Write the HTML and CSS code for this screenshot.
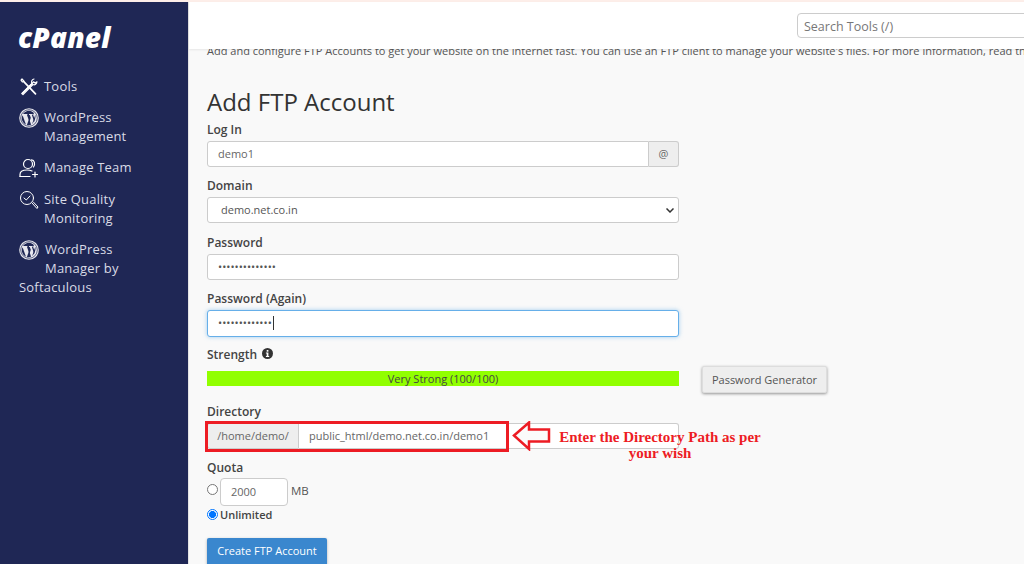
FILE: index.html
```html
<!DOCTYPE html>
<html lang="en">
<head>
    <meta charset="UTF-8">
    <meta name="viewport" content="width=device-width, initial-scale=1.0">
    <title>cPanel - Add FTP Account</title>
    <link rel="stylesheet" href="styles.css">
</head>
<body>

    <div class="top-line"></div>

    <div class="layout">

        <!-- Sidebar -->
        <aside class="sidebar">
            <div class="logo">cPanel</div>
            <ul class="side-menu">
                <li class="side-tools">
                    <svg class="side-icon" width="20" height="20" viewBox="0 0 20 20" fill="none" stroke="#fff" stroke-width="1.200" stroke-linecap="round" stroke-linejoin="round">
                        <path d="M3 2 L2 3.200 L3.500 5 L5 4.200 Z"/>
                        <path d="M5 4.800 L16.500 16.800" stroke-width="1.700"/>
                        <path d="M15 2 C12.800 2.500 12 4.800 13 6.500 L3 16.500"/>
                        <path d="M3 16.500 L4 17.500 L14 7.500 C15.800 8.500 17.800 7 18 4.800 L16 6 L14.800 4.800 Z"/>
                    </svg>
                    <span>Tools</span>
                </li>
                <li class="side-wp">
                    <svg class="side-icon" width="20" height="20" viewBox="0 0 20 20">
                        <use href="#wp-logo"/>
                    </svg>
                    <span>WordPress<br>Management</span>
                </li>
                <li class="side-team">
                    <svg class="side-icon" width="20" height="20" viewBox="0 0 20 20" fill="none" stroke="#fff" stroke-width="1.200" stroke-linecap="round">
                        <circle cx="9" cy="6" r="4.500"/>
                        <path d="M12.500 1.800 C15.500 2 16.500 6 14.500 9"/>
                        <path d="M1 18.500 V16.500 C1 13.500 4 12 8 12 C10 12 11.500 12.300 13 13"/>
                        <path d="M1 18.500 H11"/>
                        <path d="M16 14 V19 M13.500 16.500 H18.500"/>
                    </svg>
                    <span>Manage Team</span>
                </li>
                <li class="side-quality">
                    <svg class="side-icon" width="20" height="20" viewBox="0 0 20 20" fill="none" stroke="#fff" stroke-width="1" stroke-linecap="round" stroke-linejoin="round">
                        <circle cx="8" cy="8" r="6.500"/>
                        <path d="M5 8 L7.300 10 L11 6"/>
                        <path d="M13 13 L18 18.500 L19 17 L14.300 12"/>
                    </svg>
                    <span>Site Quality<br>Monitoring</span>
                </li>
                <li class="side-soft">
                    <svg class="side-icon soft-icon" width="20" height="20" viewBox="0 0 20 20">
                        <use href="#wp-logo"/>
                    </svg>
                    WordPress<br><span class="soft-indent">Manager by</span><br>Softaculous
                </li>
            </ul>
        </aside>

        <div class="main">

            <!-- Header -->
            <header class="header">
                <div class="search-box">Search Tools (/)</div>
            </header>

            <!-- Page content -->
            <div class="content">
                <p class="intro">Add and configure FTP Accounts to get your website on the internet fast. You can use an FTP client to manage your website's files. For more information, read the documentation.</p>
                <h1>Add FTP Account</h1>

                <div class="form-group">
                    <label>Log In</label>
                    <div class="input-group">
                        <div class="field">demo1</div>
                        <div class="addon addon-right">@</div>
                    </div>
                </div>

                <div class="form-group">
                    <label>Domain</label>
                    <div class="field field-select">
                        demo.net.co.in
                        <svg width="8" height="5" viewBox="0 0 8 5" fill="none" stroke="#333" stroke-width="1.500">
                            <path d="M0.500 0.500 L4 4 L7.500 0.500"/>
                        </svg>
                    </div>
                </div>

                <div class="form-group">
                    <label>Password</label>
                    <div class="field field-dots">••••••••••••••</div>
                </div>

                <div class="form-group">
                    <label>Password (Again)</label>
                    <div class="field field-dots field-focus">•••••••••••••<span class="caret"></span></div>
                </div>

                <div class="strength-row">
                    <div class="strength-col">
                        <label>Strength
                            <svg class="info" width="11" height="11" viewBox="0 0 11 11">
                                <circle cx="5.500" cy="5.500" r="5.500" fill="#333"/>
                                <rect x="4.700" y="2" width="1.700" height="1.700" fill="#fff"/>
                                <path d="M3.900 4.600 H6.400 V8 H7.200 V9 H3.900 V8 H4.700 V5.600 H3.900 Z" fill="#fff"/>
                            </svg>
                        </label>
                        <div class="strength-bar">Very Strong (100/100)</div>
                    </div>
                    <button class="btn-generator">Password Generator</button>
                </div>

                <div class="form-group dir-group">
                    <label>Directory</label>
                    <div class="input-group">
                        <div class="addon addon-left">/home/demo/</div>
                        <div class="field">public_html/demo.net.co.in/demo1</div>
                    </div>

                    <!-- Annotation drawn over the screenshot -->
                    <div class="dir-mark"></div>
                    <svg class="dir-arrow" width="40" height="30" viewBox="0 0 40 30" fill="#fbfbfb" stroke="#ed1c24" stroke-width="2.500">
                        <path d="M2 14.500 L17 1.500 V8.500 H37 V20.500 H17 V28 Z"/>
                    </svg>
                    <div class="dir-note">Enter the Directory Path as per<br>your wish</div>
                </div>

                <div class="form-group quota-group">
                    <label>Quota</label>
                    <div class="quota-row">
                        <span class="radio"></span>
                        <div class="field quota-input">2000</div>
                        <span class="quota-unit">MB</span>
                    </div>
                    <div class="unlimited-row">
                        <span class="radio radio-on"></span>
                        <span>Unlimited</span>
                    </div>
                </div>

                <button class="btn-create">Create FTP Account</button>
            </div>
        </div>
    </div>

    <svg width="0" height="0" class="defs">
        <defs>
            <g id="wp-logo">
                <circle cx="10" cy="10" r="9.800" fill="#e8e8ee"/>
                <circle cx="10" cy="10" r="8.300" fill="none" stroke="#1f2755" stroke-width="0.700"/>
                <path d="M2.800 10 C2.800 13 4.500 15.500 7 16.800 L3.600 7.200 C3.100 8.300 2.800 9.100 2.800 10 Z" fill="#1f2755"/>
                <path d="M10.100 10.700 L7.900 17 C9.200 17.400 10.700 17.300 12.100 16.800 Z" fill="#1f2755"/>
                <path d="M16.200 6.600 C16.800 8.700 16.800 11.800 13 16.300 L15.100 10.300 C15.700 8.800 16 7.700 16.200 6.600 Z" fill="#1f2755"/>
                <path d="M15.100 5.300 C13.800 3.700 12 2.800 10 2.800 C7.500 2.800 5.300 4.100 4 6 L5 6 L7.800 6 L8.900 6.800 L8 6.900 L10.400 14 L11.800 9.700 L10.800 7 L10 6.900 L10 6 L13.600 6 L13.600 6.900 L12.900 7 L15.200 13.900 C15.700 12 15.700 9.800 14.500 8 C14 7 14.100 5.700 15.100 5.300 Z" fill="#1f2755"/>
            </g>
        </defs>
    </svg>

</body>
</html>
```

FILE: styles.css
```css
body {
    font-family: "Open Sans", "Noto Sans", sans-serif;
    margin: 0;
    background-color: #fff;
    color: #333;
    overflow: hidden;
    height: 564px;
}

.top-line {
    height: 2px;
    background-color: #fdeee9;
}

.defs {
    display: block;
    height: 0;
}

.layout {
    display: flex;
    height: 562px;
}

/* Sidebar */
.sidebar {
    width: 188px;
    flex-shrink: 0;
    background-color: #1f2755;
    color: #d9dbe6;
    padding: 20px 0 0 18px;
    box-sizing: border-box;
}

.logo {
    color: #fff;
    font-size: 28px;
    line-height: 30px;
    font-weight: 800;
    font-style: italic;
    letter-spacing: 0.2px;
    height: 30px;
}

.side-menu {
    list-style: none;
    margin: 25px 0 0 1px;
    padding: 0;
    font-size: 13px;
    line-height: 19px;
    letter-spacing: 0.2px;
}

.side-menu li {
    display: flex;
    align-items: flex-start;
    gap: 5px;
    margin-bottom: 12.500px;
}

.side-menu .side-tools {
    margin-bottom: 10.500px;
}

.side-menu .side-team {
    margin-bottom: 11.500px;
}

.side-menu .side-soft {
    display: block;
    margin: 0;
}

.side-icon {
    flex-shrink: 0;
}

.soft-icon {
    float: left;
    margin: 0 6px 0 0;
}

/* Main */
.main {
    flex: 1;
    min-width: 0;
    display: flex;
    flex-direction: column;
    border-left: 1px solid #e3e3e3;
}

.header {
    height: 47px;
    flex-shrink: 0;
    background-color: #fff;
    box-shadow: 0 1px 2px rgba(0, 0, 0, 0.08);
    padding: 11px 0 0 608px;
    box-sizing: border-box;
    position: relative;
    z-index: 2;
}

.search-box {
    width: 260px;
    height: 25px;
    border: 1px solid #ccc;
    border-radius: 4px;
    padding-left: 6px;
    font-size: 12.500px;
    line-height: 25px;
    color: #777;
    box-sizing: border-box;
}

.content {
    flex: 1;
    min-height: 0;
    overflow: hidden;
    background-color: #f9f9f9;
    padding-left: 18px;
}

.intro {
    margin: -7px 0 0;
    font-size: 11px;
    line-height: 17px;
    color: #555;
    white-space: nowrap;
}

h1 {
    margin: 26px 0 0;
    font-size: 24px;
    line-height: 33px;
    font-weight: 400;
    color: #333;
}

label {
    display: block;
    font-size: 12px;
    line-height: 17px;
    font-weight: 600;
    color: #444;
    margin-bottom: 3px;
}

.form-group {
    width: 472px;
    height: 56.330px;
    position: relative;
}

.form-group:first-of-type {
    margin-top: 3px;
}

.input-group {
    display: flex;
    height: 26px;
}

.field {
    flex: 1;
    height: 26px;
    box-sizing: border-box;
    background-color: #fff;
    border: 1px solid #ccc;
    border-radius: 3px;
    padding-left: 10px;
    font-size: 11px;
    line-height: 24px;
    color: #666;
}

.input-group .field:first-child {
    border-radius: 3px 0 0 3px;
}

.input-group .field:last-child {
    border-radius: 0 3px 3px 0;
    border-left: none;
}

.addon {
    height: 26px;
    box-sizing: border-box;
    background-color: #eee;
    border: 1px solid #ccc;
    font-size: 11px;
    line-height: 24px;
    color: #666;
    text-align: center;
}

.addon-right {
    width: 30px;
    border-left: none;
    border-radius: 0 3px 3px 0;
}

.addon-left {
    width: 92px;
    border-radius: 3px 0 0 3px;
}

.field-select {
    padding-left: 13px;
    color: #555;
    display: flex;
    align-items: center;
    justify-content: space-between;
    padding-right: 4px;
}

.field-dots {
    font-size: 11px;
    display: flex;
    align-items: center;
    color: #555;
}

.field-focus {
    height: 27px;
    border-color: #66afe9;
    box-shadow: 0 0 4px rgba(102, 175, 233, 0.6);
}

.caret {
    display: inline-block;
    width: 1px;
    height: 14px;
    margin-left: 1px;
    background-color: #333;
}

/* Strength */
.strength-row {
    display: flex;
    align-items: flex-end;
    gap: 23px;
    margin-top: -0.500px;
}

.strength-col {
    width: 472px;
}

.strength-col label {
    margin-bottom: 8px;
}

.info {
    vertical-align: -0.500px;
    margin-left: 2px;
}

.strength-bar {
    height: 15px;
    background-color: #91ff00;
    font-size: 11px;
    line-height: 15px;
    text-align: center;
    color: #444;
}

.btn-generator {
    width: 125px;
    height: 27px;
    padding: 0;
    margin-bottom: -7px;
    border: 1px solid #ddd;
    border-radius: 2px;
    background-color: #eee;
    box-shadow: 0 1px 3px rgba(0, 0, 0, 0.4);
    font-family: inherit;
    font-size: 11px;
    color: #555;
}

/* Directory */
.dir-group {
    margin-top: 17px;
}

.dir-mark {
    position: absolute;
    left: -2px;
    top: 18px;
    width: 304px;
    height: 31px;
    box-sizing: border-box;
    border: 3px solid #ed1c24;
}

.dir-arrow {
    position: absolute;
    left: 305px;
    top: 18px;
}

.dir-note {
    position: absolute;
    left: 340px;
    top: 26px;
    width: 226px;
    font-family: "Liberation Serif", "DejaVu Serif", serif;
    font-size: 15px;
    line-height: 16px;
    font-weight: 700;
    text-align: center;
    color: #ed1c24;
    white-space: nowrap;
}

/* Quota */
.quota-group {
    height: auto;
    margin-top: 0;
}

.quota-group label {
    margin-bottom: 2px;
}

.quota-row {
    display: flex;
    align-items: flex-start;
    height: 28px;
}

.radio {
    width: 9px;
    height: 9px;
    flex-shrink: 0;
    border: 1px solid #777;
    border-radius: 50%;
    background-color: #fff;
    margin: 6px 2px 0 0;
}

.radio-on {
    border: 1px solid #0075ff;
    background: radial-gradient(circle, #0075ff 0, #0075ff 3.200px, #fff 3.800px);
    margin: 0 2px 0 0;
}

.quota-input {
    flex: none;
    width: 68px;
    height: 28px;
    line-height: 26px;
    border-radius: 4px;
    margin-right: 3px;
}

.quota-unit {
    font-size: 11.500px;
    line-height: 25px;
    color: #555;
}

.unlimited-row {
    display: flex;
    align-items: center;
    font-size: 11px;
    line-height: 17px;
    font-weight: 600;
    color: #444;
}

.btn-create {
    display: block;
    margin-top: 15px;
    width: 120px;
    height: 28px;
    padding: 0 0 4px;
    border: none;
    border-radius: 2px;
    background-color: #3a87ce;
    box-shadow: 0 1px 3px rgba(0, 0, 0, 0.3);
    font-family: inherit;
    font-size: 11px;
    color: #fff;
}
```
